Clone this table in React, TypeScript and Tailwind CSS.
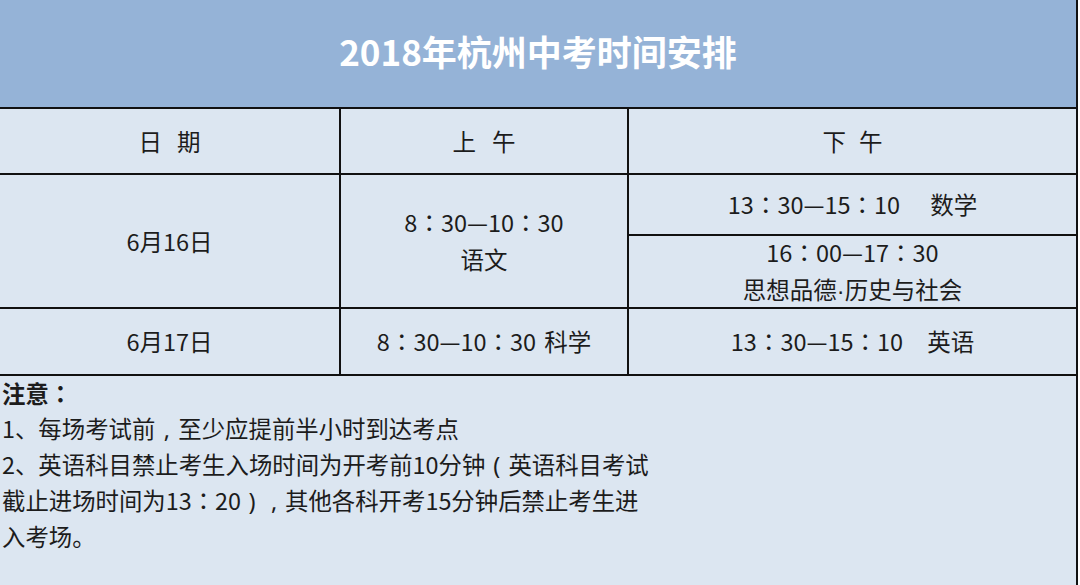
const font = { fontFamily: '"Noto Sans CJK SC", "Noto Sans", sans-serif' };
// JP cut centres the full-width colon, as in the picture
const jp = { fontFamily: '"Noto Sans CJK JP", "Noto Sans", sans-serif' };

const Cell = ({ className = "", children }: { className?: string; children: React.ReactNode }) => (
  <div className={`bg-[#dce6f1] flex flex-col items-center justify-center text-[23.5px] text-[#1c1c1c] leading-[37px] whitespace-nowrap ${className}`}>
    {children}
  </div>
);

const Time = ({ children }: { children: React.ReactNode }) => <span style={jp}>{children}</span>;

// centred punctuation mark in a full-width box
const Mark = ({ children, w = "w-[23px]" }: { children: React.ReactNode; w?: string }) => (
  <span className={`inline-block ${w} text-center`} style={{ fontFamily: '"Noto Sans", sans-serif' }}>
    {children}
  </span>
);

export default function App() {
  return (
    <div className="w-[1080px] h-[585px] bg-white overflow-hidden" style={font}>
      <div className="w-[1078px] h-[585px] border-r-2 border-[#111] flex flex-col">
        {/* Title band */}
        <div className="h-[107px] bg-[#95b3d7] flex items-center justify-center">
          <h1 className="text-[35px] font-bold text-white -mt-1">2018年杭州中考时间安排</h1>
        </div>

        {/* Schedule grid, borders drawn by the gap */}
        <div className="bg-[#111] py-[2px] grid grid-cols-[339px_286px_447px] grid-rows-[64px_59px_71px_65px] gap-[2px]">
          <Cell><span className="tracking-[15px] -mr-[15px]">日期</span></Cell>
          <Cell><span className="tracking-[16px] -mr-[16px]">上午</span></Cell>
          <Cell><span className="tracking-[13px] -mr-[13px]">下午</span></Cell>

          <Cell className="row-span-2">6月16日</Cell>
          <Cell className="row-span-2">
            <Time>8：30—10：30</Time>
            <span>语文</span>
          </Cell>
          <Cell>
            <div>
              <Time>13：30—15：10</Time>
              <span className="ml-[30px]">数学</span>
            </div>
          </Cell>
          <Cell>
            <Time>16：00—17：30</Time>
            <span>
              思想品德<span style={{ fontFamily: '"Liberation Sans", sans-serif' }}>·</span>历史与社会
            </span>
          </Cell>

          <Cell>6月17日</Cell>
          <Cell>
            <div>
              <Time>8：30—10：30</Time>
              <span className="ml-[8px]">科学</span>
            </div>
          </Cell>
          <Cell>
            <div>
              <Time>13：30—15：10</Time>
              <span className="ml-[24px]">英语</span>
            </div>
          </Cell>
        </div>

        {/* Notes */}
        <div className="flex-1 bg-[#dce6f1] px-[2px] text-[23.4px] leading-[35px] text-[#1c1c1c] whitespace-nowrap">
          <p className="font-bold">注意<span style={jp}>：</span></p>
          <p>1、每场考试前<Mark>,</Mark>至少应提前半小时到达考点</p>
          <p>
            2、英语科目禁止考生入场时间为开考前10分钟<Mark>(</Mark>英语科目考试
            <br />
            截止进场时间为13<span style={jp}>：</span>20<Mark w="w-[22px]">)</Mark><Mark w="w-[22px]">,</Mark>其他各科开考15分钟后禁止考生进
            <br />
            入考场。
          </p>
        </div>
      </div>
    </div>
  );
}
